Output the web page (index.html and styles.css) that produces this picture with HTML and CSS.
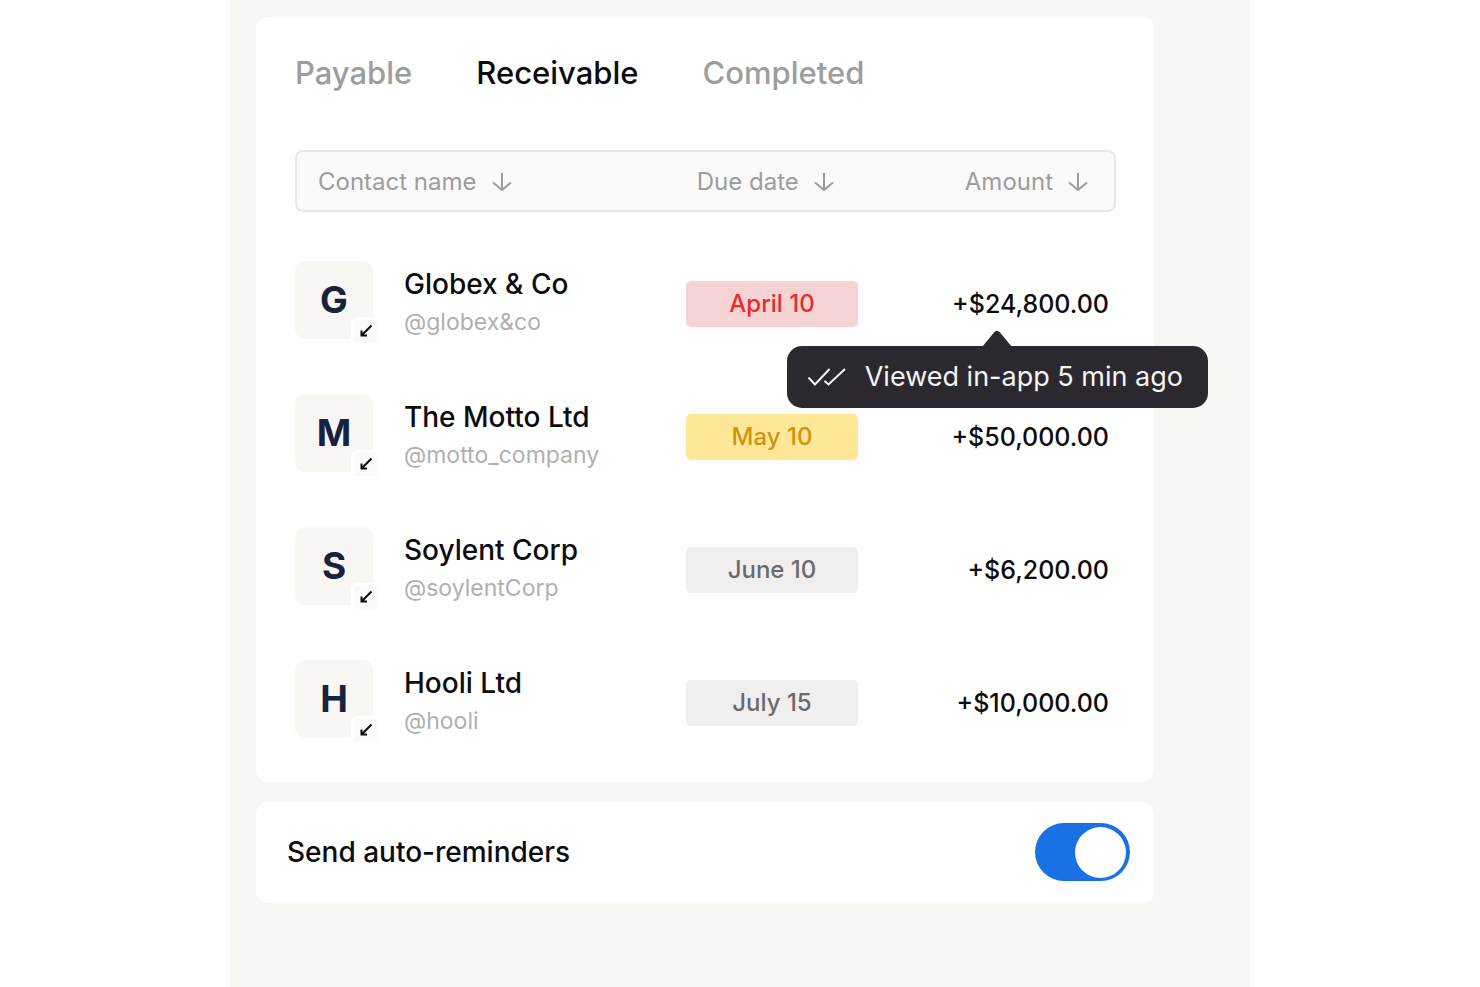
FILE: index.html
```html
<!DOCTYPE html>
<html lang="en">
<head>
<meta charset="utf-8">
<meta name="viewport" content="width=device-width, initial-scale=1">
<title>Receivable invoices</title>
<link rel="stylesheet" href="styles.css">
</head>
<body>
<svg class="sprite" aria-hidden="true">
  <symbol id="arrow-down" viewBox="0 0 20 20"><path d="M10 1v17M1 10.500l9 7.500 9-7.500"/></symbol>
  <symbol id="arrow-in" viewBox="0 0 14 14"><path d="M12.500 1.500L3.500 10.500M2.500 6.500V11.500h5.500"/></symbol>
</svg>
<main class="canvas">
  <section class="card invoices">
    <div class="tabs" role="tablist">
      <button class="tab" type="button" role="tab" aria-selected="false">Payable</button>
      <button class="tab tab-active" type="button" role="tab" aria-selected="true">Receivable</button>
      <button class="tab" type="button" role="tab" aria-selected="false">Completed</button>
    </div>
    <table class="table">
      <thead>
        <tr>
          <th class="col-contact" scope="col"><button class="sort" type="button">Contact name<svg class="sort-icon" aria-hidden="true"><use href="#arrow-down"/></svg></button></th>
          <th class="col-due" scope="col"><button class="sort" type="button">Due date<svg class="sort-icon" aria-hidden="true"><use href="#arrow-down"/></svg></button></th>
          <th class="col-amount" scope="col"><button class="sort" type="button">Amount<svg class="sort-icon" aria-hidden="true"><use href="#arrow-down"/></svg></button></th>
        </tr>
      </thead>
      <tbody>
        <tr>
          <td><div class="contact"><div class="avatar">G<span class="badge"><svg class="badge-icon" aria-hidden="true"><use href="#arrow-in"/></svg></span></div><div class="who"><div class="name">Globex &amp; Co</div><div class="handle">@globex&amp;co</div></div></div></td>
          <td><div class="pill pill-late">April 10</div></td>
          <td class="money"><div class="amount">+$24,800.00
            <div class="tooltip" role="tooltip">
              <svg class="tooltip-tip" viewBox="0 0 30 17" aria-hidden="true"><path d="M0 17L12 2.500Q15-1 18 2.500L30 17z"/></svg>
              <svg class="checks" viewBox="0 0 40 20" aria-hidden="true"><path d="M1.500 10.500l6.500 7L22.500 2M17.500 14l4 3.500L38 2"/></svg>
              <span>Viewed in-app 5 min ago</span>
            </div>
          </div></td>
        </tr>
        <tr>
          <td><div class="contact"><div class="avatar">M<span class="badge"><svg class="badge-icon" aria-hidden="true"><use href="#arrow-in"/></svg></span></div><div class="who"><div class="name">The Motto Ltd</div><div class="handle">@motto_company</div></div></div></td>
          <td><div class="pill pill-soon">May 10</div></td>
          <td class="money"><div class="amount">+$50,000.00</div></td>
        </tr>
        <tr>
          <td><div class="contact"><div class="avatar">S<span class="badge"><svg class="badge-icon" aria-hidden="true"><use href="#arrow-in"/></svg></span></div><div class="who"><div class="name">Soylent Corp</div><div class="handle">@soylentCorp</div></div></div></td>
          <td><div class="pill">June 10</div></td>
          <td class="money"><div class="amount">+$6,200.00</div></td>
        </tr>
        <tr>
          <td><div class="contact"><div class="avatar">H<span class="badge"><svg class="badge-icon" aria-hidden="true"><use href="#arrow-in"/></svg></span></div><div class="who"><div class="name">Hooli Ltd</div><div class="handle">@hooli</div></div></div></td>
          <td><div class="pill">July 15</div></td>
          <td class="money"><div class="amount">+$10,000.00</div></td>
        </tr>
      </tbody>
    </table>
  </section>
  <section class="card reminders">
    <label class="reminders-label" for="auto-reminders">Send auto-reminders</label>
    <input class="switch" id="auto-reminders" type="checkbox" role="switch" checked>
  </section>
</main>
</body>
</html>
```
FILE: styles.css
```css
* {
  box-sizing: border-box;
}

body {
  margin: 0;
  background: #fff;
  color: #0c0c0e;
  font-family: Inter, "Liberation Sans", sans-serif;
}

button {
  padding: 0;
  border: 0;
  background: none;
  color: inherit;
  font: inherit;
  cursor: pointer;
}

.sprite {
  display: none;
}

.canvas {
  display: flex;
  flex-direction: column;
  gap: 20px;
  max-width: 1020px;
  min-height: 100vh;
  margin: 0 auto;
  padding: 17px 96px 24px 26px;
  background: #f8f7f3;
}

.card {
  border-radius: 12px;
  background: #fff;
}

.invoices {
  padding: 38px 38px 13px 39px;
}

.tabs {
  display: flex;
  gap: 64px;
  margin-bottom: 59px;
}

.tab {
  color: #9d9d9d;
  font-size: 31px;
  font-weight: 500;
  line-height: 36px;
}

.tab-active {
  color: #0c0c0e;
}

.table {
  width: 100%;
  table-layout: fixed;
  border-collapse: separate;
  border-spacing: 0;
}

.table th {
  height: 62px;
  padding: 2px 0 0;
  border: solid #e8e8e8;
  border-width: 2px 0;
  background: #fafafa;
  color: #9d9d9d;
  font-size: 24px;
  font-weight: 400;
  text-align: left;
}

.table .col-contact {
  width: 47.6%;
  padding-left: 21px;
  border-left-width: 2px;
  border-radius: 8px 0 0 8px;
}

.table .col-due {
  width: 21%;
  padding-left: 11px;
}

.table .col-amount {
  padding-right: 26px;
  border-right-width: 2px;
  border-radius: 0 8px 8px 0;
  text-align: right;
}

.sort {
  display: inline-flex;
  align-items: center;
  gap: 15px;
  line-height: 32px;
}

.sort-icon {
  width: 20px;
  height: 20px;
  fill: none;
  stroke: #9d9d9d;
  stroke-width: 2;
}

.table tbody::before {
  content: "";
  display: block;
  height: 25px;
}

.table td {
  height: 133px;
  padding: 0;
  vertical-align: middle;
}

.contact {
  display: flex;
  align-items: center;
  gap: 31px;
}

.avatar {
  position: relative;
  display: grid;
  place-items: center;
  width: 78px;
  height: 78px;
  margin-bottom: 8px;
  border-radius: 10px;
  background: #f8f7f3;
  color: #18213d;
  font-size: 37px;
  font-weight: 700;
}

.badge {
  position: absolute;
  right: -4px;
  bottom: -4px;
  display: grid;
  place-items: center;
  width: 26px;
  height: 26px;
  border: solid #fff;
  border-width: 3px 0 0 3px;
  border-radius: 6px 0 0 0;
  background: #fafafa;
}

.badge-icon {
  width: 14px;
  height: 14px;
  fill: none;
  stroke: #0c0c0e;
  stroke-width: 2;
}

.who {
  margin-bottom: 2px;
}

.name {
  font-size: 28px;
  font-weight: 500;
  line-height: 38px;
}

.handle {
  color: #b0b0b0;
  font-size: 23px;
  line-height: 38px;
}

.pill {
  border-radius: 5px;
  background: #f0eeef;
  color: #6b6b6b;
  font-size: 24px;
  font-weight: 500;
  line-height: 46px;
  text-align: center;
}

.pill-late {
  background: #f5d3d5;
  color: #e92b30;
}

.pill-soon {
  background: #ffe798;
  color: #cf930f;
}

.table .money {
  padding-right: 7px;
  text-align: right;
}

.amount {
  position: relative;
  display: inline-block;
  font-size: 25px;
  font-weight: 500;
  line-height: 32px;
}

.tooltip {
  position: absolute;
  top: 58px;
  right: -99px;
  z-index: 1;
  display: flex;
  align-items: center;
  gap: 18px;
  height: 62px;
  padding: 0 25px 0 20px;
  border-radius: 15px;
  background: #2c2830;
  color: #f4f4f4;
  font-size: 27px;
  font-weight: 400;
  white-space: nowrap;
}

.tooltip-tip {
  position: absolute;
  bottom: 100%;
  left: 50%;
  width: 30px;
  height: 17px;
  margin-left: -15px;
  margin-bottom: -1px;
  fill: #2c2830;
}

.checks {
  width: 40px;
  height: 20px;
  fill: none;
  stroke: #f4f4f4;
  stroke-width: 2;
}

.reminders {
  display: flex;
  align-items: center;
  justify-content: space-between;
  padding: 21px 24px 22px 31px;
}

.reminders-label {
  font-size: 28px;
  font-weight: 500;
  line-height: 38px;
}

.switch {
  appearance: none;
  display: flex;
  align-items: center;
  width: 95px;
  height: 58px;
  margin: 0;
  padding: 0 4px;
  border-radius: 29px;
  background: #c8c8cc;
  cursor: pointer;
}

.switch::before {
  content: "";
  width: 51px;
  height: 51px;
  border-radius: 50%;
  background: #fff;
}

.switch:checked {
  justify-content: flex-end;
  background: #1a71e6;
}
```
